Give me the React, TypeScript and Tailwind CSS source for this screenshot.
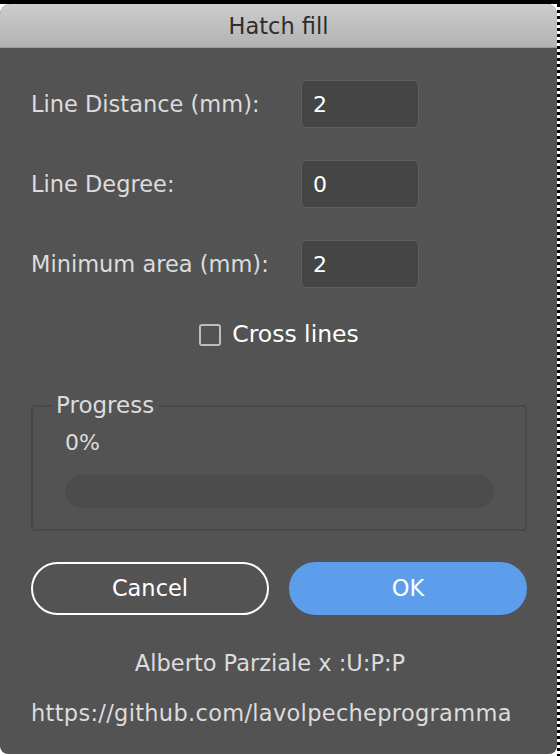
import React from "react";

const font = { fontFamily: '"DejaVu Sans", "Liberation Sans", sans-serif' };

function Field({ label, value }: { label: string; value: string }) {
  return (
    <div className="flex items-center h-[48px]">
      <div className="w-[270px] text-[22.5px] text-[#dcdcdc] leading-none">{label}</div>
      <div className="w-[118px] h-[48px] rounded-[5px] border border-[#606060] bg-[#454545] flex items-center pl-[11px] text-[22px] text-white">
        {value}
      </div>
    </div>
  );
}

export default function App() {
  return (
    <div className="w-[560px] h-[756px] bg-white flex flex-col overflow-hidden" style={font}>
      <div className="h-[4px] bg-black shrink-0" />
      <div className="flex flex-1 min-h-0">
        <div className="w-[557px] h-[750px] flex flex-col rounded-t-[10px] rounded-b-[8px] overflow-hidden bg-[#535353]">
          <div className="h-[44px] shrink-0 bg-gradient-to-b from-[#cdcdcd] to-[#b2b2b2] border-b border-[#9a9a9a] flex items-center justify-center">
            <span className="text-[22.5px] text-[#2e2e2e] leading-none pt-[2px]">Hatch fill</span>
          </div>
          <div className="flex flex-col pl-[31px] pr-[30px]">
            <div className="flex flex-col gap-[32px] pt-[32px]">
              <Field label="Line Distance (mm):" value="2" />
              <Field label="Line Degree:" value="0" />
              <Field label="Minimum area (mm):" value="2" />
            </div>
            <div className="flex items-center justify-center gap-[11px] mt-[35px] h-[24px]">
              <div className="w-[22px] h-[22px] rounded-[3px] border-2 border-[#bdbdbd]" />
              <span className="text-[23.5px] text-white leading-none">Cross lines</span>
            </div>
            <div className="relative mt-[58px] w-[496px] h-[126px] border-2 border-[#484848] rounded-[4px] pt-[24px] pl-[32px] pr-[32px]">
              <div className="absolute left-[18px] top-[-14px] px-[5px] bg-[#535353] text-[23px] text-[#dcdcdc] leading-[24px]">
                Progress
              </div>
              <div className="text-[22px] text-[#dcdcdc] leading-[24px]">0%</div>
              <div className="mt-[20px] w-[429px] h-[33px] rounded-full bg-[#4c4c4c]" />
            </div>
            <div className="flex gap-[20px] mt-[31px]">
              <div className="w-[238px] h-[53px] rounded-full border-2 border-white flex items-center justify-center text-[22.5px] text-white">
                Cancel
              </div>
              <div className="w-[238px] h-[53px] rounded-full bg-[#5c9eec] flex items-center justify-center text-[22.5px] text-white">
                OK
              </div>
            </div>
            <div className="mt-[36px] text-center text-[22.5px] text-[#dcdcdc] leading-[24px] pr-[18px]">
              Alberto Parziale x :U:P:P
            </div>
            <div className="mt-[26px] text-[22.5px] text-[#dcdcdc] leading-[24px] whitespace-nowrap tracking-[0.3px]">
              https://github.com/lavolpecheprogramma
            </div>
          </div>
        </div>
        <div className="w-[3px] bg-[repeating-linear-gradient(180deg,#000_0px,#000_3px,#fff_3px,#fff_6px)]" />
      </div>
    </div>
  );
}
